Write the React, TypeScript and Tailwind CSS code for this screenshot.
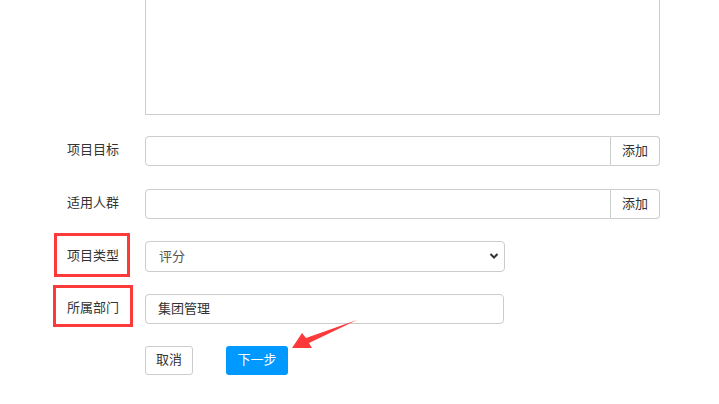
import React from "react";

const font = { fontFamily: '"Noto Sans CJK SC", "Noto Sans", sans-serif' };

function Label({ text, box }: { text: string; box?: { l: number; t: number; w: number; h: number } }) {
  return (
    <div className="relative w-[91px] h-full flex items-center pl-[13px] text-[13px] text-[#333]">
      <span className="relative -top-[2px]">{text}</span>
      {box && (
        <div
          className="absolute border-[3px] border-[#fd3a3a] pointer-events-none"
          style={{ left: box.l, top: box.t, width: box.w, height: box.h }}
        />
      )}
    </div>
  );
}

function AddRow({ label, mt }: { label: string; mt: string }) {
  return (
    <div className={`flex h-[30px] ${mt}`}>
      <Label text={label} />
      <div className="flex w-[515px] h-full">
        <input className="flex-1 h-full border border-[#ccc] rounded-l-[4px] outline-none" />
        <button className="w-[49px] h-full border border-l-0 border-[#ccc] rounded-r-[4px] bg-white text-[13px] text-[#333] pb-[3px]">
          添加
        </button>
      </div>
    </div>
  );
}

export default function App() {
  return (
    <div className="relative w-[719px] h-[404px] overflow-hidden bg-white pl-[54px]" style={font}>
      <div className="ml-[91px] w-[515px] h-[115px] border-x border-b border-[#ccc]" />
      <AddRow label="项目目标" mt="mt-[21px]" />
      <AddRow label="适用人群" mt="mt-[23px]" />
      <div className="flex h-[31px] mt-[22px]">
        <Label text="项目类型" box={{ l: 0, t: -8, w: 76, h: 44 }} />
        <div className="relative w-[360px] h-full">
          <select
            className="appearance-none w-full h-full border border-[#ccc] rounded-[4px] pl-[13px] pb-[2px] text-[13px] text-[#555] bg-white outline-none"
            defaultValue="评分"
          >
            <option>评分</option>
          </select>
          <svg className="absolute right-[6px] top-[11px]" width="10" height="8" viewBox="0 0 10 8">
            <path d="M1.5 2 L5 5.5 L8.5 2" stroke="#333" strokeWidth="2" fill="none" />
          </svg>
        </div>
      </div>
      <div className="flex h-[30px] mt-[22px]">
        <Label text="所属部门" box={{ l: -1, t: -9, w: 80, h: 42 }} />
        <input
          className="w-[359px] h-full border border-[#ccc] rounded-[4px] pl-[12px] pb-[4px] text-[13px] text-[#333] outline-none"
          defaultValue="集团管理"
        />
      </div>
      <div className="flex h-[29px] mt-[22px] ml-[91px] gap-[33px]">
        <button className="w-[48px] h-full border border-[#ccc] rounded-[3px] bg-white text-[13px] text-[#333] pb-[3px]">取消</button>
        <button className="w-[62px] h-full rounded-[3px] bg-[#0099ff] text-[13px] text-white pb-[3px]">下一步</button>
      </div>
      <svg className="absolute left-0 top-0 pointer-events-none" width="719" height="404">
        <polygon points="292,348 302,333 306,338 357,320 309,343 312,348" fill="#fd3a3a" />
      </svg>
    </div>
  );
}
